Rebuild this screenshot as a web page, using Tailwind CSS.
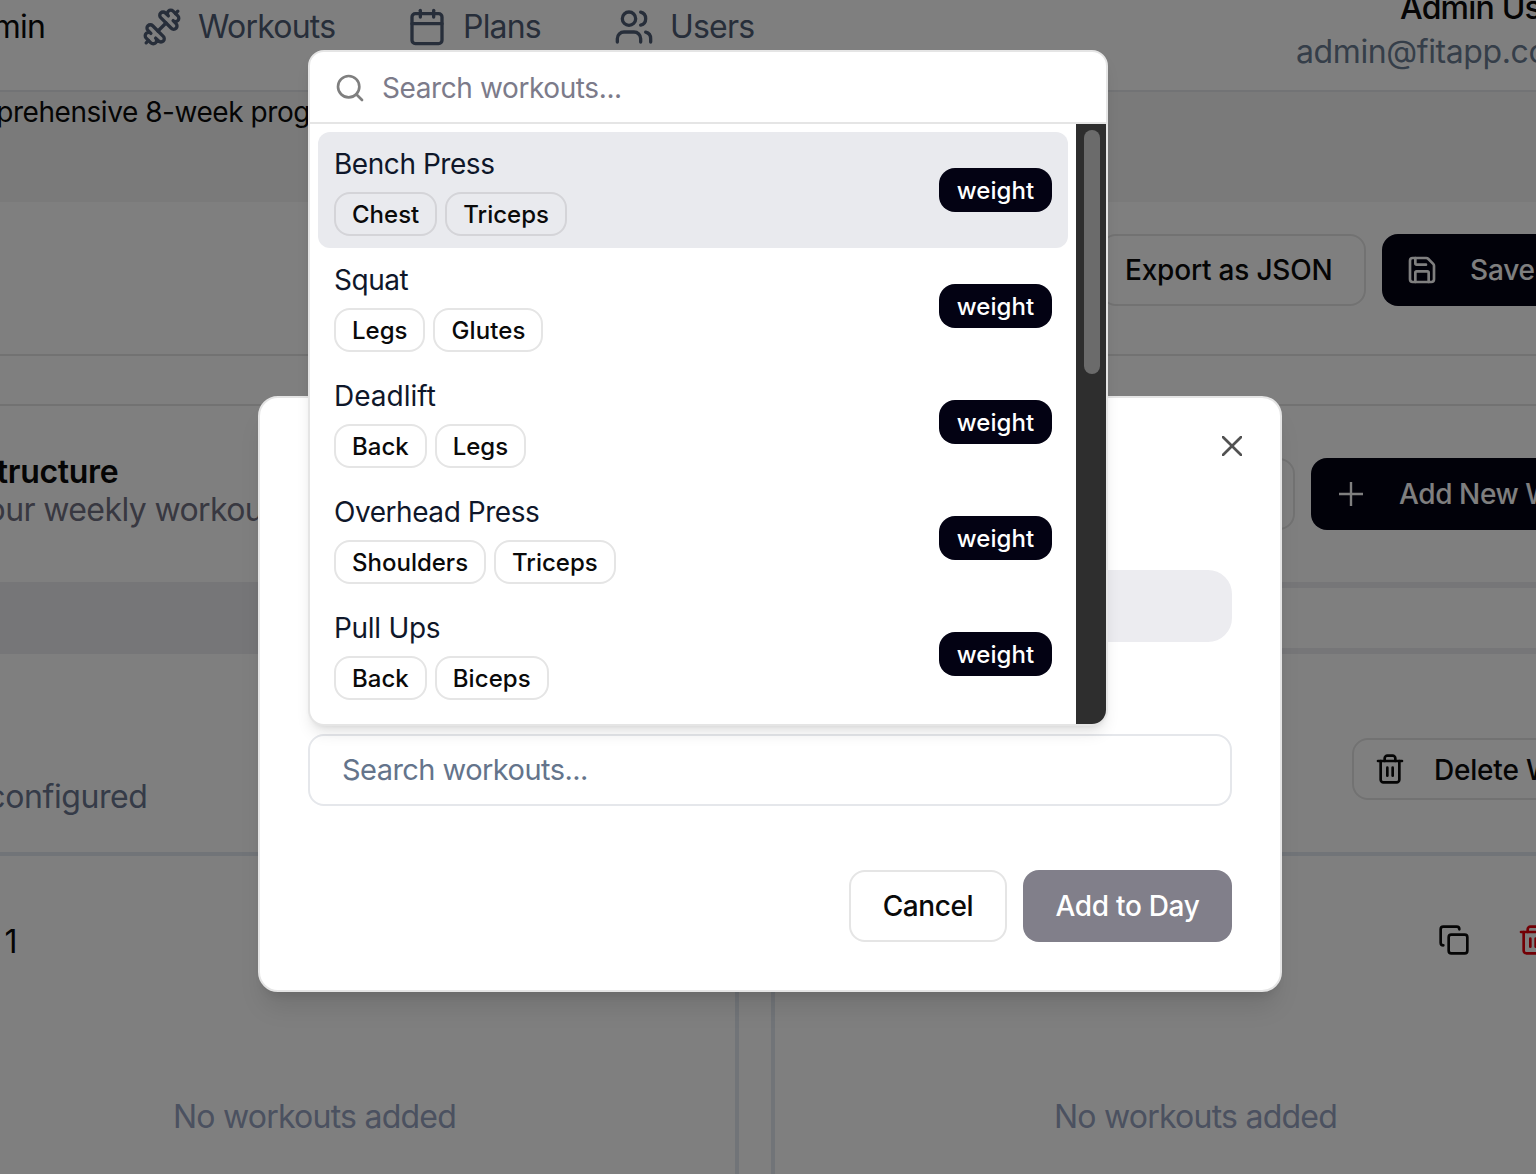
<!DOCTYPE html>
<html lang="en">
<head>
  <meta charset="UTF-8" />
  <title>Plan editor</title>
  <script src="https://cdn.jsdelivr.net/npm/@tailwindcss/browser@4"></script>
</head>
<body class="bg-white h-screen overflow-hidden relative font-['Inter','Liberation_Sans',sans-serif] text-[#0a0a0a]">

  <!-- Page behind the dialog -->
  <div class="w-[1536px] h-[1174px] overflow-hidden whitespace-nowrap">

    <!-- Nav -->
    <nav class="h-[92px] border-b-2 border-[#e5e7eb] flex text-[32px] tracking-[-0.8px] text-[#4f5d75] overflow-hidden">
      <div class="w-[142px] shrink-0 overflow-hidden flex justify-end pr-[97px] pt-[4px] h-[50px] items-center text-[#0a0a0a]">Admin</div>
      <div class="flex items-center gap-[16px] w-[265px] shrink-0 h-[54px]">
        <svg class="w-[40px] h-[40px] -scale-x-100" viewBox="0 0 24 24" fill="none" stroke="currentColor" stroke-width="2" stroke-linecap="round" stroke-linejoin="round"><path d="M14.4 14.4 9.6 9.6"/><path d="M18.657 21.485a2 2 0 1 1-2.829-2.828l-1.767 1.768a2 2 0 1 1-2.829-2.829l6.364-6.364a2 2 0 1 1 2.829 2.829l-1.768 1.767a2 2 0 1 1 2.828 2.829z"/><path d="m21.5 21.5-1.4-1.4"/><path d="M3.9 3.9 2.5 2.5"/><path d="M6.404 12.768a2 2 0 1 1-2.829-2.829l1.768-1.767a2 2 0 1 1-2.828-2.829l2.828-2.828a2 2 0 1 1 2.829 2.828l1.767-1.768a2 2 0 1 1 2.829 2.829z"/></svg>
        <span>Workouts</span>
      </div>
      <div class="flex items-center gap-[16px] w-[207px] shrink-0 h-[54px]">
        <svg class="w-[40px] h-[40px]" viewBox="0 0 24 24" fill="none" stroke="currentColor" stroke-width="2" stroke-linecap="round" stroke-linejoin="round"><path d="M8 2v4"/><path d="M16 2v4"/><rect width="18" height="18" x="3" y="4" rx="2"/><path d="M3 10h18"/></svg>
        <span>Plans</span>
      </div>
      <div class="flex items-center gap-[16px] w-[682px] shrink-0 h-[54px]">
        <svg class="w-[40px] h-[40px]" viewBox="0 0 24 24" fill="none" stroke="currentColor" stroke-width="2" stroke-linecap="round" stroke-linejoin="round"><path d="M16 21v-2a4 4 0 0 0-4-4H6a4 4 0 0 0-4 4v2"/><circle cx="9" cy="7" r="4"/><path d="M22 21v-2a4 4 0 0 0-3-3.87"/><path d="M16 3.13a4 4 0 0 1 0 7.75"/></svg>
        <span>Users</span>
      </div>
      <div class="shrink-0 -mt-[12px]">
        <div class="text-[#0a0a0a] pl-[104px] h-[40px] leading-[40px] font-medium">Admin User</div>
        <div class="text-[#6b7c93] leading-[44px] mt-[2px] tracking-[-0.4px]">admin@fitapp.com</div>
      </div>
    </nav>

    <!-- Plan description band -->
    <div class="h-[110px] bg-[#f5f5f5] pt-[2px] text-[28px] tracking-[-0.45px] leading-[36px] overflow-hidden">
      <div class="-ml-[86px]">A comprehensive 8-week program</div>
    </div>

    <!-- Toolbar -->
    <div class="h-[154px] border-b-2 border-[#e5e5e5] flex pt-[32px] gap-[16px] text-[28px] tracking-[-0.2px] font-medium">
      <button class="w-[266px] h-[72px] shrink-0 ml-[1100px] border-2 border-[#e5e5e5] rounded-[16px] text-left pl-[23px]">Export as JSON</button>
      <button class="w-[300px] h-[72px] shrink-0 rounded-[16px] bg-[#030213] text-white flex items-center gap-[32px] pl-[24px]">
        <svg class="w-[32px] h-[32px]" viewBox="0 0 24 24" fill="none" stroke="currentColor" stroke-width="2" stroke-linecap="round" stroke-linejoin="round"><path d="M15.2 3a2 2 0 0 1 1.4.6l3.8 3.8a2 2 0 0 1 .6 1.4V19a2 2 0 0 1-2 2H5a2 2 0 0 1-2-2V5a2 2 0 0 1 2-2z"/><path d="M17 21v-7a1 1 0 0 0-1-1H8a1 1 0 0 0-1 1v7"/><path d="M7 3v4a1 1 0 0 0 1 1h7"/></svg>
        Save Plan
      </button>
    </div>

    <!-- Spacer band -->
    <div class="h-[50px] border-b-2 border-[#e5e5e5]"></div>

    <!-- Structure heading -->
    <div class="h-[176px] flex items-start overflow-hidden">
      <div class="w-[900px] shrink-0 pt-[44px] overflow-hidden">
        <div class="-ml-[161px] text-[32px] tracking-[-0.3px] leading-[44px] font-semibold">Workout Structure</div>
        <div class="-ml-[183px] text-[32px] tracking-[-0.6px] leading-[40px] text-[#717182] mt-[-4px]">Configure your weekly workout plan</div>
      </div>
      <button class="ml-[200px] mt-[52px] w-[195px] h-[72px] shrink-0 border-2 border-[#e5e5e5] rounded-[16px]" aria-label="Preview"></button>
      <button class="ml-[16px] mt-[52px] w-[300px] h-[72px] shrink-0 rounded-[16px] bg-[#030213] text-white flex items-center gap-[36px] pl-[28px] text-[28px] tracking-[-0.4px] font-medium">
        <svg class="w-[24px] h-[24px]" viewBox="5 5 14 14" fill="none" stroke="currentColor" stroke-width="1.4" stroke-linecap="round" stroke-linejoin="round"><path d="M5 12h14"/><path d="M12 5v14"/></svg>
        Add New Week
      </button>
    </div>

    <!-- Week tabs -->
    <div class="h-[72px] flex">
      <div class="w-[900px] bg-[#ececf0]"></div>
      <div class="flex-1 border-y-[6px] border-[#ececf0]"></div>
    </div>

    <!-- Week header -->
    <div class="h-[198px] flex overflow-hidden">
      <div class="w-[1352px] shrink-0 pt-[123px] text-[32px] tracking-[-0.4px] leading-[40px] text-[#6a7690] overflow-hidden">
        <div class="-ml-[118px]">7 days configured</div>
      </div>
      <button class="mt-[84px] w-[300px] h-[62px] shrink-0 border-2 border-[#e5e5e5] rounded-[16px] flex items-center gap-[28px] pl-[20px] text-[28px] tracking-[-0.2px] font-medium">
        <svg class="w-[32px] h-[32px]" viewBox="0 0 24 24" fill="none" stroke="currentColor" stroke-width="2" stroke-linecap="round" stroke-linejoin="round"><path d="M3 6h18"/><path d="M19 6v14c0 1-1 2-2 2H7c-1 0-2-1-2-2V6"/><path d="M8 6V4c0-1 1-2 2-2h4c1 0 2 1 2 2v2"/><line x1="10" x2="10" y1="11" y2="17"/><line x1="14" x2="14" y1="11" y2="17"/></svg>
        <span class="pt-[2px]">Delete Week</span>
      </button>
    </div>

    <!-- Day row -->
    <div class="h-[130px] border-t-4 border-[#e2e8f0] flex items-start overflow-hidden">
      <div class="w-[1438px] shrink-0 pt-[66px] text-[32px] leading-[40px] overflow-hidden"><div class="-ml-[63px]">Day 1</div></div>
      <svg class="mt-[68px] w-[32px] h-[32px] shrink-0" viewBox="0 0 24 24" fill="none" stroke="currentColor" stroke-width="2" stroke-linecap="round" stroke-linejoin="round"><rect width="14" height="14" x="8" y="8" rx="2"/><path d="M4 16c-1.1 0-2-.9-2-2V4c0-1.1.9-2 2-2h10c1.1 0 2 .9 2 2"/></svg>
      <svg class="ml-[47px] mt-[68px] w-[32px] h-[32px] shrink-0 text-[#e7000b]" viewBox="0 0 24 24" fill="none" stroke="currentColor" stroke-width="2" stroke-linecap="round" stroke-linejoin="round"><path d="M3 6h18"/><path d="M19 6v14c0 1-1 2-2 2H7c-1 0-2-1-2-2V6"/><path d="M8 6V4c0-1 1-2 2-2h4c1 0 2 1 2 2v2"/><line x1="10" x2="10" y1="11" y2="17"/><line x1="14" x2="14" y1="11" y2="17"/></svg>
    </div>

    <!-- Day columns -->
    <div class="flex gap-[32px] -ml-[110px] text-[32px] tracking-[-0.76px] text-[#96a2c0]">
      <div class="w-[849px] h-[300px] shrink-0 border-x-4 border-[#e2e8f0] flex justify-center pt-[115px] leading-[40px]">No workouts added</div>
      <div class="w-[849px] h-[300px] shrink-0 border-x-4 border-[#e2e8f0] flex justify-center pt-[115px] leading-[40px]">No workouts added</div>
    </div>
  </div>

  <!-- Backdrop -->
  <div class="absolute inset-0 bg-black/50"></div>

  <!-- Dialog -->
  <div class="absolute left-[258px] top-[396px] w-[1024px] h-[596px] bg-white rounded-[20px] border-2 border-[#e5e5e5] shadow-xl px-[48px]">
    <button class="absolute right-[38px] top-[38px] text-[#525252]" aria-label="Close">
      <svg class="w-[20px] h-[20px]" viewBox="6 6 12 12" fill="none" stroke="currentColor" stroke-width="1.6" stroke-linecap="round"><path d="M18 6 6 18"/><path d="m6 6 12 12"/></svg>
    </button>
    <div class="h-[72px] mt-[172px] rounded-[24px] bg-[#ececf0]"></div>
    <div class="h-[72px] mt-[92px] rounded-[16px] border-2 border-[#e5e7eb] flex items-center pl-[32px] text-[29px] tracking-[-0.55px] text-[#64748b]">Search workouts...</div>
    <div class="flex justify-end gap-[16px] mt-[64px] text-[28px] font-medium">
      <button class="w-[158px] h-[72px] rounded-[16px] border-2 border-[#e5e5e5] tracking-[-0.4px]">Cancel</button>
      <button class="w-[209px] h-[72px] rounded-[16px] bg-[#817f8a] text-white tracking-[-0.3px]">Add to Day</button>
    </div>
  </div>

  <!-- Workout picker dropdown -->
  <div class="absolute left-[308px] top-[50px] w-[800px] h-[676px] bg-white rounded-[16px] border-2 border-[#e5e5e5] shadow-lg overflow-hidden">
    <div class="h-[68px] pt-[2px] flex items-center pl-[24px] gap-[16px] text-[28px] tracking-[-0.4px] text-[#7c7b8a] border-b-2 border-[#e5e5e5] box-content">
      <svg class="w-[32px] h-[32px] text-[#7f7f7f]" viewBox="0 0 24 24" fill="none" stroke="currentColor" stroke-width="2" stroke-linecap="round" stroke-linejoin="round"><path d="m21 21-4.3-4.3"/><circle cx="11" cy="11" r="8"/></svg>
      Search workouts...
    </div>
    <div class="flex h-[602px]">
      <div class="flex-1 pl-[8px] pr-[8px] pt-[8px] overflow-hidden">

        <div class="h-[116px] rounded-[12px] bg-[#e9eaee] flex items-center justify-between px-[16px]">
          <div class="pt-[2px]">
            <div class="text-[28px] tracking-[-0.45px] leading-[36px] text-[#0f172a]">Bench Press</div>
            <div class="flex gap-[8px] mt-[10px]">
              <span class="h-[44px] pt-[2px] flex items-center px-[16px] rounded-[16px] border-2 border-[#d4d4d8] text-[24px] font-medium">Chest</span>
              <span class="h-[44px] pt-[2px] flex items-center px-[16px] rounded-[16px] border-2 border-[#d4d4d8] text-[24px] font-medium">Triceps</span>
            </div>
          </div>
          <span class="h-[44px] w-[113px] pt-[1px] flex items-center justify-center rounded-[16px] bg-[#030213] text-white text-[24px] tracking-[0.1px] font-medium">weight</span>
        </div>

        <div class="h-[116px] rounded-[12px] flex items-center justify-between px-[16px]">
          <div class="pt-[2px]">
            <div class="text-[28px] tracking-[-0.45px] leading-[36px] text-[#0f172a]">Squat</div>
            <div class="flex gap-[8px] mt-[10px]">
              <span class="h-[44px] pt-[2px] flex items-center px-[16px] rounded-[16px] border-2 border-[#e5e5e5] text-[24px] font-medium">Legs</span>
              <span class="h-[44px] pt-[2px] flex items-center px-[16px] rounded-[16px] border-2 border-[#e5e5e5] text-[24px] tracking-[0.1px] font-medium">Glutes</span>
            </div>
          </div>
          <span class="h-[44px] w-[113px] pt-[1px] flex items-center justify-center rounded-[16px] bg-[#030213] text-white text-[24px] tracking-[0.1px] font-medium">weight</span>
        </div>

        <div class="h-[116px] rounded-[12px] flex items-center justify-between px-[16px]">
          <div class="pt-[2px]">
            <div class="text-[28px] leading-[36px] text-[#0f172a]">Deadlift</div>
            <div class="flex gap-[8px] mt-[10px]">
              <span class="h-[44px] pt-[2px] flex items-center px-[16px] rounded-[16px] border-2 border-[#e5e5e5] text-[24px] font-medium">Back</span>
              <span class="h-[44px] pt-[2px] flex items-center px-[16px] rounded-[16px] border-2 border-[#e5e5e5] text-[24px] font-medium">Legs</span>
            </div>
          </div>
          <span class="h-[44px] w-[113px] pt-[1px] flex items-center justify-center rounded-[16px] bg-[#030213] text-white text-[24px] tracking-[0.1px] font-medium">weight</span>
        </div>

        <div class="h-[116px] rounded-[12px] flex items-center justify-between px-[16px]">
          <div class="pt-[2px]">
            <div class="text-[28px] tracking-[-0.45px] leading-[36px] text-[#0f172a]">Overhead Press</div>
            <div class="flex gap-[8px] mt-[10px]">
              <span class="h-[44px] pt-[2px] flex items-center px-[16px] rounded-[16px] border-2 border-[#e5e5e5] text-[24px] font-medium">Shoulders</span>
              <span class="h-[44px] pt-[2px] flex items-center px-[16px] rounded-[16px] border-2 border-[#e5e5e5] text-[24px] font-medium">Triceps</span>
            </div>
          </div>
          <span class="h-[44px] w-[113px] pt-[1px] flex items-center justify-center rounded-[16px] bg-[#030213] text-white text-[24px] tracking-[0.1px] font-medium">weight</span>
        </div>

        <div class="h-[116px] rounded-[12px] flex items-center justify-between px-[16px]">
          <div class="pt-[2px]">
            <div class="text-[28px] tracking-[-0.3px] leading-[36px] text-[#0f172a]">Pull Ups</div>
            <div class="flex gap-[8px] mt-[10px]">
              <span class="h-[44px] pt-[2px] flex items-center px-[16px] rounded-[16px] border-2 border-[#e5e5e5] text-[24px] font-medium">Back</span>
              <span class="h-[44px] pt-[2px] flex items-center px-[16px] rounded-[16px] border-2 border-[#e5e5e5] text-[24px] tracking-[0.1px] font-medium">Biceps</span>
            </div>
          </div>
          <span class="h-[44px] w-[113px] pt-[1px] flex items-center justify-center rounded-[16px] bg-[#030213] text-white text-[24px] tracking-[0.1px] font-medium">weight</span>
        </div>

      </div>
      <!-- Scrollbar -->
      <div class="w-[30px] shrink-0 bg-[#2e2e2e] pt-[6px] pl-[8px]">
        <div class="w-[16px] h-[244px] rounded-[8px] bg-[#6b6b6b]"></div>
      </div>
    </div>
  </div>
</body>
</html>
